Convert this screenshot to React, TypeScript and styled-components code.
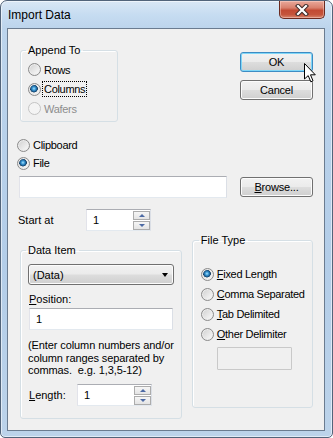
import React from 'react';
import styled, { createGlobalStyle } from 'styled-components';

const GlobalStyle = createGlobalStyle`
  html, body {
    margin: 0;
    padding: 0;
    background: #ffffff;
  }
  body {
    font-family: "Liberation Sans", Arial, sans-serif;
    font-size: 11px;
    color: #000;
  }
  * {
    box-sizing: border-box;
  }
`;

export default function App() {
  return (
    <>
      <GlobalStyle />
      <Window>
        <TitleBar>
          <Title>Import Data</Title>
          <CloseButton>
            <svg width="18" height="12" viewBox="0 0 18 12">
              <path d="M5 2 L13 10 M13 2 L5 10" stroke="#3d2a28" strokeWidth="4.2" strokeLinecap="square" />
              <path d="M5 2 L13 10 M13 2 L5 10" stroke="#ffffff" strokeWidth="2.2" strokeLinecap="square" />
            </svg>
          </CloseButton>
        </TitleBar>

        <Client>
          <TopRow>
            <GroupBox $width={98} $height={79} $padLeft={7}>
              <Legend>Append To</Legend>
              <RadioList $top={3}>
                <Radio label="Rows" $h={19.5} />
                <Radio label="Columns" $h={19.5} checked focused />
                <Radio label="Wafers" $h={19.5} disabled />
              </RadioList>
            </GroupBox>
            <ButtonColumn>
              <PushButton $default>OK</PushButton>
              <PushButton>Cancel</PushButton>
            </ButtonColumn>
          </TopRow>

          <SourceList>
            <Radio label="Clipboard" $h={18} />
            <Radio label="File" $h={18} checked />
          </SourceList>

          <FileRow>
            <TextBox $width={208} readOnly value="" />
            <PushButton>
              <u>B</u>rowse...
            </PushButton>
          </FileRow>

          <StartRow>
            <FieldLabel $width={68}>Start at</FieldLabel>
            <Spinner value="1" width={65} />
          </StartRow>

          <BottomRow>
            <GroupBox $width={163} $height={176} $padLeft={7} $top={10}>
              <Legend>Data Item</Legend>
              <DropDown>
                <span>(Data)</span>
                <DropArrow />
              </DropDown>
              <PositionLabel>
                <u>P</u>osition:
              </PositionLabel>
              <TextBox $width={144} $left={1} readOnly value="1" />
              <HelpText>
                (Enter column numbers and/or
                <br />
                column ranges separated by
                <br />
                commas.&nbsp; e.g. 1,3,5-12)
              </HelpText>
              <LengthRow>
                <FieldLabel $width={48}>
                  <u>L</u>ength:
                </FieldLabel>
                <Spinner value="1" width={75} />
              </LengthRow>
            </GroupBox>

            <GroupBox $width={122} $height={175} $padLeft={8} $left={10}>
              <Legend>File Type</Legend>
              <RadioList $top={17}>
                <Radio label="Fixed Length" accel $h={20} checked />
                <Radio label="Comma Separated" accel $h={20} />
                <Radio label="Tab Delimited" accel $h={20} />
                <Radio label="Other Delimiter" accel $h={20} />
              </RadioList>
              <DisabledBox />
            </GroupBox>
          </BottomRow>
        </Client>

        <Cursor width="13" height="20" viewBox="0 0 13 20">
          <path
            d="M0.5 0.5 L0.5 16 L4.2 12.6 L6.8 18.8 L9 17.8 L6.5 11.8 L11.3 11.8 Z"
            fill="#ffffff"
            stroke="#000000"
            strokeWidth="1"
            strokeLinejoin="miter"
          />
        </Cursor>
      </Window>
    </>
  );
}

function Radio({
  label,
  checked,
  disabled,
  focused,
  accel,
  $h,
}: {
  label: string;
  checked?: boolean;
  disabled?: boolean;
  focused?: boolean;
  accel?: boolean;
  $h: number;
}) {
  return (
    <RadioRow $h={$h} $disabled={disabled}>
      <RadioCircle $checked={checked} $disabled={disabled} />
      <RadioText $focused={focused}>
        {accel ? (
          <>
            <u>{label[0]}</u>
            {label.slice(1)}
          </>
        ) : (
          label
        )}
      </RadioText>
    </RadioRow>
  );
}

function Spinner({ value, width }: { value: string; width: number }) {
  return (
    <SpinBox $width={width}>
      <SpinValue>{value}</SpinValue>
      <SpinButtons>
        <SpinButton>
          <SpinArrow $up />
        </SpinButton>
        <SpinButton>
          <SpinArrow />
        </SpinButton>
      </SpinButtons>
    </SpinBox>
  );
}

const Window = styled.div`
  position: relative;
  width: 333px;
  height: 438px;
  display: flex;
  flex-direction: column;
  padding: 0 7px 6px 6px;
  border: 1px solid #52647a;
  border-radius: 7px 7px 5px 5px;
  background: linear-gradient(
    180deg,
    #d9e7f5 0px,
    #c6dcf1 14px,
    #bcd4ec 28px,
    #b3cde8 60%,
    #bcd3ea 100%
  );
  box-shadow: inset 0 0 0 1px rgba(255, 255, 255, 0.55);
`;

const TitleBar = styled.div`
  height: 27px;
  display: flex;
  justify-content: space-between;
  align-items: flex-start;
`;

const Title = styled.div`
  padding: 7px 0 0 1px;
  font-size: 12px;
  line-height: 14px;
  color: #000;
`;

const CloseButton = styled.div`
  width: 46px;
  height: 18px;
  display: flex;
  align-items: center;
  justify-content: center;
  border: 1px solid #6b2a20;
  border-top: none;
  border-radius: 0 0 5px 5px;
  background: linear-gradient(
    180deg,
    #e9a99b 0%,
    #d8806d 40%,
    #c24a33 55%,
    #c5553c 80%,
    #d7866e 100%
  );
  box-shadow: inset 0 0 0 1px rgba(255, 220, 210, 0.45);
`;

const Client = styled.div`
  flex: 1;
  display: flex;
  flex-direction: column;
  border: 1px solid #6b7c90;
  background: #f0f0f0;
  padding-right: 11px;
`;

const TopRow = styled.div`
  margin-top: 14px;
  padding-left: 12px;
  display: flex;
  justify-content: space-between;
  align-items: flex-start;
`;

const GroupBox = styled.fieldset<{
  $width: number;
  $height: number;
  $padLeft: number;
  $top?: number;
  $left?: number;
}>`
  margin: ${(p) => p.$top || 0}px 0 0 ${(p) => p.$left || 0}px;
  padding: 0 0 0 ${(p) => p.$padLeft}px;
  width: ${(p) => p.$width}px;
  height: ${(p) => p.$height}px;
  min-width: 0;
  border: 1px solid #d5dfe5;
  border-radius: 3px;
  box-shadow: inset 1px 1px 0 #ffffff;
`;

const Legend = styled.legend`
  padding: 0 3px 0 2px;
  margin-left: -2px;
  font-size: 11px;
  line-height: 14px;
  color: #000;
`;

const RadioList = styled.div<{ $top: number }>`
  margin-top: ${(p) => p.$top}px;
  display: flex;
  flex-direction: column;
`;

const RadioRow = styled.label<{ $h: number; $disabled?: boolean }>`
  display: flex;
  align-items: center;
  gap: 3px;
  height: ${(p) => p.$h}px;
  color: ${(p) => (p.$disabled ? '#8d8d8d' : '#000')};
  letter-spacing: -0.3px;
  white-space: nowrap;
`;

const RadioCircle = styled.span<{ $checked?: boolean; $disabled?: boolean }>`
  flex: none;
  width: 13px;
  height: 13px;
  border-radius: 50%;
  border: 1px solid ${(p) => (p.$disabled ? '#c4c4c4' : '#8b8b8b')};
  background: ${(p) =>
    p.$disabled
      ? '#f4f4f4'
      : p.$checked
      ? 'radial-gradient(circle at 45% 42%, #a9e2fb 0px, #3d9bd8 1.6px, #1a5c90 3px, #173f63 3.6px, rgba(0,0,0,0) 4.1px), linear-gradient(135deg, #cfcfcf 0%, #f6f6f6 85%)'
      : 'linear-gradient(135deg, #cfcfcf 0%, #f6f6f6 85%)'};
  box-shadow: inset 0 0 0 1px ${(p) => (p.$disabled ? '#f4f4f4' : '#ececec')};
`;

const RadioText = styled.span<{ $focused?: boolean }>`
  line-height: 14px;
  padding: 0 1px;
  margin-left: -1px;
  outline: ${(p) => (p.$focused ? '1px dotted #000' : 'none')};
  outline-offset: 0;
`;

const ButtonColumn = styled.div`
  margin-top: 9px;
  display: flex;
  flex-direction: column;
  gap: 8px;
`;

const PushButton = styled.button<{ $default?: boolean }>`
  width: 73px;
  height: 20px;
  padding: 0;
  font-family: inherit;
  font-size: 11px;
  color: #000;
  letter-spacing: -0.2px;
  border: 1px solid ${(p) => (p.$default ? '#3c8cc4' : '#707070')};
  border-radius: 3px;
  background: linear-gradient(
    180deg,
    #f2f2f2 0%,
    #ebebeb 48%,
    #dddddd 52%,
    #cfcfcf 100%
  );
  box-shadow: inset 0 0 0 1px ${(p) => (p.$default ? '#7fd6f7' : '#fcfcfc')};
`;

const SourceList = styled.div`
  margin-top: 14px;
  padding-left: 9px;
  display: flex;
  flex-direction: column;
`;

const FileRow = styled.div`
  margin-top: 4px;
  padding-left: 11px;
  display: flex;
  align-items: center;
  justify-content: space-between;
`;

const TextBox = styled.input<{ $width: number; $left?: number }>`
  display: block;
  width: ${(p) => p.$width}px;
  height: 22px;
  margin: 0 0 0 ${(p) => p.$left || 0}px;
  padding: 0 0 0 6px;
  font-family: inherit;
  font-size: 11px;
  color: #000;
  background: #ffffff;
  border: 1px solid;
  border-color: #abadb3 #dbdfe6 #e3e9ef #e2e3ea;
  border-radius: 0;
  outline: none;
`;

const StartRow = styled.div`
  margin-top: 11px;
  padding-left: 10px;
  display: flex;
  align-items: center;
`;

const FieldLabel = styled.span<{ $width: number }>`
  width: ${(p) => p.$width}px;
  line-height: 14px;
`;

const SpinBox = styled.div<{ $width: number }>`
  width: ${(p) => p.$width}px;
  height: 22px;
  display: flex;
  align-items: center;
  background: #ffffff;
  border: 1px solid;
  border-color: #abadb3 #dbdfe6 #e3e9ef #e2e3ea;
`;

const SpinValue = styled.span`
  flex: 1;
  padding-left: 6px;
  line-height: 14px;
`;

const SpinButtons = styled.div`
  width: 17px;
  height: 20px;
  display: flex;
  flex-direction: column;
  justify-content: space-between;
  padding: 1px 0 0;
`;

const SpinButton = styled.div`
  height: 9px;
  display: flex;
  align-items: center;
  justify-content: center;
  border: 1px solid #acacac;
  background: linear-gradient(180deg, #f6f6f6 0%, #e4e4e4 100%);
`;

const SpinArrow = styled.span<{ $up?: boolean }>`
  width: 0;
  height: 0;
  border-left: 3.5px solid transparent;
  border-right: 3.5px solid transparent;
  ${(p) =>
    p.$up
      ? 'border-bottom: 3px solid #4d6aa4;'
      : 'border-top: 3px solid #4d6aa4;'}
`;

const BottomRow = styled.div`
  margin-top: 2px;
  padding-left: 12px;
  display: flex;
  align-items: flex-start;
`;

const DropDown = styled.div`
  margin-top: 7px;
  width: 146px;
  height: 21px;
  display: flex;
  align-items: center;
  justify-content: space-between;
  padding: 0 5px 0 4px;
  border: 1px solid #707070;
  border-radius: 3px;
  background: linear-gradient(
    180deg,
    #f2f2f2 0%,
    #ebebeb 48%,
    #dddddd 52%,
    #cfcfcf 100%
  );
  box-shadow: inset 0 0 0 1px #fcfcfc;
`;

const DropArrow = styled.span`
  width: 0;
  height: 0;
  border-left: 3.5px solid transparent;
  border-right: 3.5px solid transparent;
  border-top: 4px solid #000;
`;

const PositionLabel = styled.div`
  margin-top: 7px;
  padding-left: 1px;
  line-height: 14px;
  margin-bottom: 2px;
`;

const HelpText = styled.div`
  margin-top: 9px;
  line-height: 12.5px;
  letter-spacing: -0.1px;
  white-space: nowrap;
`;

const LengthRow = styled.div`
  margin-top: 7.5px;
  padding-left: 1px;
  display: flex;
  align-items: center;
`;

const DisabledBox = styled.div`
  margin: 3px 0 0 16px;
  width: 75px;
  height: 23px;
  border: 1px solid #c9c9c9;
  background: #f0f0f0;
  border-radius: 1px;
`;

const Cursor = styled.svg`
  position: absolute;
  left: 303px;
  top: 62px;
  pointer-events: none;
`;
